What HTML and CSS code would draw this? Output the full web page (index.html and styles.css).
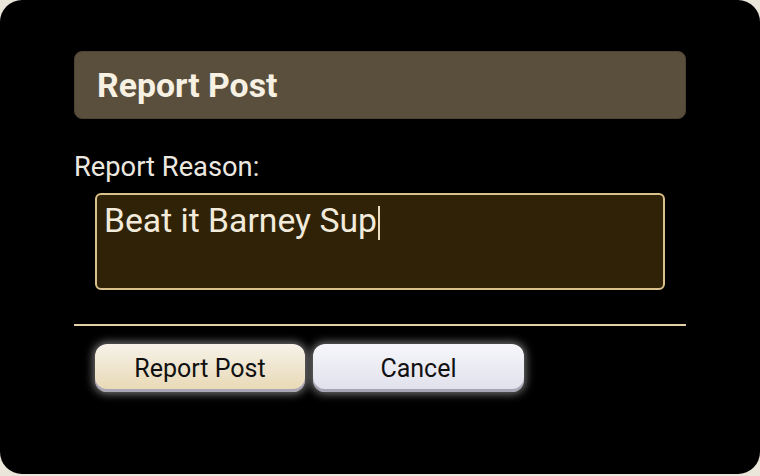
FILE: index.html
```html
<!DOCTYPE html>
<html>
<head>
<meta charset="utf-8">
<link rel="stylesheet" href="styles.css">
</head>
<body>
<div class="dialog">
  <div class="header">Report Post</div>
  <div class="label">Report Reason:</div>
  <div class="reason">Beat it Barney Sup<span class="caret"></span></div>
  <div class="sep"></div>
  <div class="actions">
    <button class="btn btn-report">Report Post</button>
    <button class="btn btn-cancel">Cancel</button>
  </div>
</div>
</body>
</html>
```
FILE: styles.css
```css
html, body {
  margin: 0;
  padding: 0;
  background: #ebe6da;
}
body {
  width: 760px;
  height: 476px;
  overflow: hidden;
  font-family: Roboto, "Liberation Sans", sans-serif;
}
.dialog {
  box-sizing: border-box;
  width: 760px;
  height: 474px;
  background: #000;
  border-radius: 22px;
  padding: 51px 74px 0 74px;
  display: flex;
  flex-direction: column;
}
.header {
  box-sizing: border-box;
  height: 68px;
  background: #5a4f3c;
  border: 1px solid #4e4330;
  border-radius: 8px;
  color: #f7f1e3;
  font-size: 33.8px;
  font-weight: 700;
  padding-left: 22px;
  display: flex;
  align-items: center;
}
.label {
  margin-top: 32px;
  color: #ece8e0;
  font-size: 27.3px;
  line-height: 32px;
}
.reason {
  box-sizing: border-box;
  margin: 10px 0 0 21px;
  width: 570px;
  height: 97px;
  background: #302206;
  border: 2px solid #d9c08c;
  border-radius: 6px;
  padding: 6px 7px;
  color: #f2ebdc;
  font-size: 33.7px;
  line-height: 40px;
}
.caret {
  display: inline-block;
  width: 2px;
  height: 34px;
  background: #e8dcc0;
  vertical-align: -8px;
  margin-left: 1px;
}
.sep {
  margin-top: 34px;
  height: 2px;
  background: #e3d0a6;
}
.actions {
  display: flex;
  gap: 8px;
  margin: 18px 0 0 21px;
}
.btn {
  box-sizing: border-box;
  width: 210px;
  height: 48px;
  border: none;
  border-radius: 12px;
  font-family: Roboto, "Liberation Sans", sans-serif;
  font-size: 25px;
  color: #111;
  padding: 0;
  box-shadow: 0 0 9px 2px rgba(255, 255, 255, 0.45), inset 0 -3px 0 #a8a6b4;
}
.btn-report {
  background: linear-gradient(#f6f2e8, #e8d8b4);
}
.btn-cancel {
  width: 211px;
  background: linear-gradient(#f6f6fb, #e0e0ec);
}
```
